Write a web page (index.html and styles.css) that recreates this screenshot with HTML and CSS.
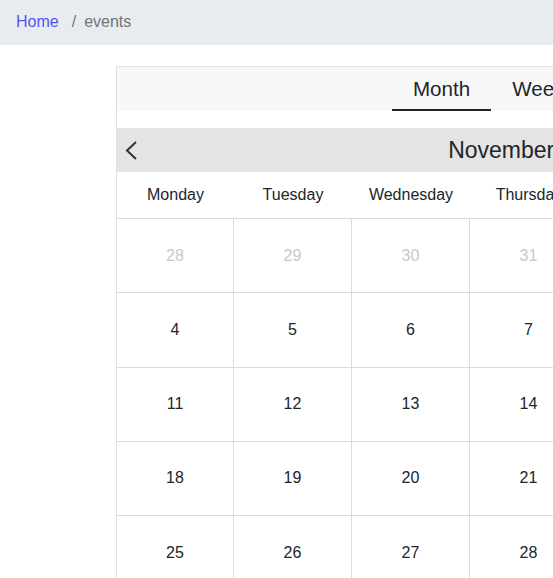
FILE: index.html
```html
<!DOCTYPE html>
<html lang="en">
<head>
<meta charset="utf-8">
<title>events</title>
<link rel="stylesheet" href="styles.css">
</head>
<body>
<nav class="breadcrumb">
  <a class="crumb-link" href="#">Home</a>
  <span class="crumb-sep">/</span>
  <span class="crumb-current">events</span>
</nav>
<div class="page">
  <div class="calendar">
    <div class="tabs">
      <div class="tab active">Month</div>
      <div class="tab">Week</div>
      <div class="tab">Day</div>
    </div>
    <div class="month-bar">
      <button class="nav-btn" aria-label="previous">
        <svg width="16" height="22" viewBox="0 0 16 22"><path d="M13 3 L4 11.5 L13 20" fill="none" stroke="#333" stroke-width="2"/></svg>
      </button>
      <div class="month-title">November 2019</div>
      <button class="nav-btn" aria-label="next">
        <svg width="16" height="22" viewBox="0 0 16 22"><path d="M3 3 L12 11.5 L3 20" fill="none" stroke="#333" stroke-width="2"/></svg>
      </button>
    </div>
    <div class="weekdays">
      <div>Monday</div><div>Tuesday</div><div>Wednesday</div><div>Thursday</div><div>Friday</div><div>Saturday</div><div>Sunday</div>
    </div>
    <div class="days">
      <div class="day muted">28</div><div class="day muted">29</div><div class="day muted">30</div><div class="day muted">31</div><div class="day">1</div><div class="day">2</div><div class="day">3</div>
      <div class="day">4</div><div class="day">5</div><div class="day">6</div><div class="day">7</div><div class="day">8</div><div class="day">9</div><div class="day">10</div>
      <div class="day">11</div><div class="day">12</div><div class="day">13</div><div class="day">14</div><div class="day">15</div><div class="day">16</div><div class="day">17</div>
      <div class="day">18</div><div class="day">19</div><div class="day">20</div><div class="day">21</div><div class="day">22</div><div class="day">23</div><div class="day">24</div>
      <div class="day">25</div><div class="day">26</div><div class="day">27</div><div class="day">28</div><div class="day">29</div><div class="day">30</div><div class="day muted">1</div>
    </div>
  </div>
</div>
</body>
</html>
```
FILE: styles.css
```css
html, body {
  margin: 0;
  padding: 0;
  overflow: hidden;
}
body {
  font-family: "Liberation Sans", Arial, sans-serif;
  font-size: 16px;
  color: #212529;
  background: #fff;
}
.breadcrumb {
  display: flex;
  align-items: center;
  height: 45px;
  box-sizing: border-box;
  padding: 0 16px 1px;
  background: #e9ecef;
  line-height: 20px;
}
.crumb-link {
  color: #5252f2;
  text-decoration: none;
}
.crumb-sep {
  color: #6c757d;
  padding: 0 8px 0 13px;
}
.crumb-current {
  color: #6c757d;
}
.page {
  padding: 21px 0 0 116px;
}
.calendar {
  width: 826px;
  border: 1px solid #e0e0e0;
  border-bottom: none;
}
.tabs {
  display: flex;
  justify-content: center;
  height: 44px;
  background: #f8f8f8;
  padding-right: 4px;
}
.tab {
  font-size: 20.6px;
  line-height: 22px;
  padding: 11px 21px;
  color: #212529;
  box-sizing: border-box;
  height: 44px;
}
.tab.active {
  border-bottom: 2px solid #212529;
}
.month-bar {
  margin-top: 17px;
  height: 44px;
  background: #e4e4e4;
  display: flex;
  align-items: center;
  justify-content: space-between;
  padding: 0 6px;
}
.nav-btn {
  border: none;
  background: none;
  padding: 0;
  width: 16px;
  height: 22px;
  display: flex;
  align-items: center;
  justify-content: center;
}
.month-title {
  font-size: 23px;
  color: #212529;
}
.weekdays {
  display: grid;
  grid-template-columns: 117px repeat(6, 118px);
  height: 47px;
  align-items: center;
  text-align: center;
  border-bottom: 1px solid #dcdcdc;
  box-sizing: border-box;
}
.days {
  display: grid;
  grid-template-columns: 117px repeat(6, 118px);
  grid-auto-rows: 74.25px;
}
.day {
  display: flex;
  align-items: center;
  justify-content: center;
  border-right: 1px solid #dcdcdc;
  border-bottom: 1px solid #dcdcdc;
  color: #212529;
}
.day.muted {
  color: #c8c8c8;
}
```
